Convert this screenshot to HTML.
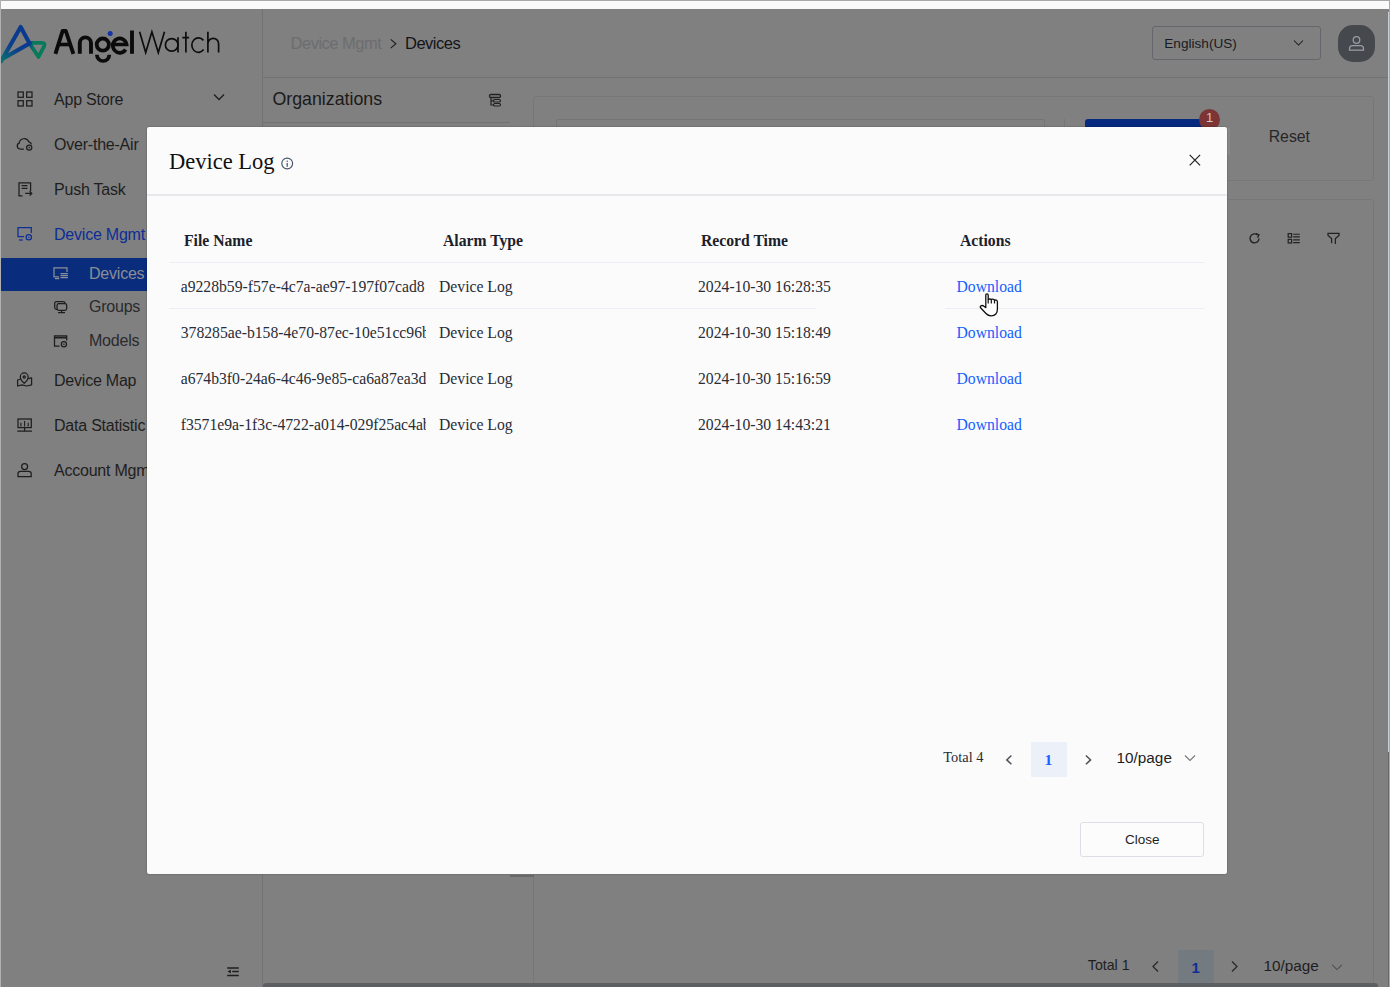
<!DOCTYPE html>
<html><head><meta charset="utf-8">
<style>
*{box-sizing:border-box;margin:0;padding:0}
html,body{width:1390px;height:987px;overflow:hidden;background:#808080}
body{position:relative;font-family:"Liberation Sans",sans-serif}
.a{position:absolute}
.t{white-space:nowrap}
svg{overflow:visible}
</style></head><body>
<div class="a" style="left:0px;top:0px;width:1390px;height:1px;background:#a8a8a8;"></div>
<div class="a" style="left:1px;top:1px;width:1388px;height:8px;background:#fafafa;"></div>
<div class="a" style="left:0px;top:0px;width:1px;height:987px;background:#b0b0b0;"></div>
<div class="a" style="left:1389px;top:0px;width:1px;height:987px;background:#a8a8a8;"></div>
<div class="a" style="left:1px;top:9px;width:1388px;height:978px;background:#808080;"></div>
<div class="a" style="left:1388px;top:12px;width:1px;height:740px;background:#c8ccd4;"></div>
<div class="a" style="left:1388px;top:752px;width:1px;height:235px;background:#6a6a6a;"></div>
<div class="a" style="left:262px;top:9px;width:1px;height:978px;background:#727272;"></div>
<div class="a" style="left:263px;top:77px;width:1125px;height:1px;background:#727272;"></div>
<svg class="a" style="left:0px;top:20px;" width="50" height="48" viewBox="0 0 50 48"><defs><linearGradient id="lg1" gradientUnits="userSpaceOnUse" x1="3" y1="40" x2="18" y2="18"><stop offset="0" stop-color="#0a6e72"/><stop offset="0.6" stop-color="#0a3f8c"/><stop offset="1" stop-color="#0a3a8e"/></linearGradient><linearGradient id="lg2" gradientUnits="userSpaceOnUse" x1="29" y1="30" x2="40" y2="30"><stop offset="0" stop-color="#0a4a88"/><stop offset="0.4" stop-color="#077a5a"/><stop offset="1" stop-color="#077a5a"/></linearGradient></defs><path d="M29.5 23.2 L38.5 36.9 L44.2 26.2 Q45.3 22.8 42 22.8 L31 22.8" fill="none" stroke="url(#lg2)" stroke-width="3.8" stroke-linejoin="round" stroke-linecap="round"/><path d="M1 41.5 L20.7 7 L29.6 23.4 L1 39.8 Z" fill="none" stroke="url(#lg1)" stroke-width="4.1" stroke-linejoin="round"/></svg>
<svg class="a" style="left:50px;top:25px;" width="90" height="43" viewBox="0 0 90 43"><g fill="none" stroke="#0b0b0b" stroke-width="3.9"><path d="M5.4 28.8 L12.6 6 H15.8 L23.4 28.8" stroke-linejoin="round"/><path d="M9 19.5 H19.5" stroke-width="3.6"/><path d="M29.8 28.8 V18 A5.6 5.6 0 0 1 41 18 V28.8"/><circle cx="52.8" cy="19.6" r="6.1" stroke-width="3.8"/><path d="M46.9 29.8 A6.2 6.2 0 0 0 59.3 29.8" stroke-width="3.7"/><path d="M61 19.5 H76.6 A6.9 7.2 0 1 0 75.6 24.5" stroke-width="3.7"/><path d="M82 5.5 V28.8"/></g><circle cx="60.2" cy="8.4" r="2.5" fill="#1334a8"/></svg>
<svg class="a" style="left:136px;top:25px;" width="90" height="43" viewBox="0 0 90 43"><g fill="none" stroke="#0d0d0d" stroke-width="1.7"><path d="M3.6 6.8 L9.7 27.5 L15.9 6.8 L22.3 27.5 L28.5 6.8"/><circle cx="35.7" cy="19.9" r="6.3"/><path d="M42 12.3 V27.6"/><path d="M49.9 6.8 V27.6 M46.3 12.6 H53.1"/><path d="M67.4 15.4 A6.6 7.2 0 1 0 67.6 24.6"/><path d="M71.9 6.8 V27.6 M71.9 18.7 A5.35 5.35 0 0 1 82.6 18.7 V27.6"/></g></svg>
<div class="a t" style="left:54px;top:89.35px;font-family:'Liberation Sans',sans-serif;font-size:16px;line-height:22px;color:#1e1e1e;font-weight:400;letter-spacing:-0.22px;">App Store</div>
<div class="a t" style="left:54px;top:134.35px;font-family:'Liberation Sans',sans-serif;font-size:16px;line-height:22px;color:#1e1e1e;font-weight:400;letter-spacing:-0.22px;">Over-the-Air</div>
<div class="a t" style="left:54px;top:179.35px;font-family:'Liberation Sans',sans-serif;font-size:16px;line-height:22px;color:#1e1e1e;font-weight:400;letter-spacing:-0.22px;">Push Task</div>
<div class="a t" style="left:54px;top:224.35px;font-family:'Liberation Sans',sans-serif;font-size:16px;line-height:22px;color:#0c2e96;font-weight:400;letter-spacing:-0.22px;">Device Mgmt</div>
<div class="a t" style="left:54px;top:370.35px;font-family:'Liberation Sans',sans-serif;font-size:16px;line-height:22px;color:#1e1e1e;font-weight:400;letter-spacing:-0.22px;">Device Map</div>
<div class="a t" style="left:54px;top:415.35px;font-family:'Liberation Sans',sans-serif;font-size:16px;line-height:22px;color:#1e1e1e;font-weight:400;letter-spacing:-0.22px;">Data Statistic</div>
<div class="a t" style="left:54px;top:460.35px;font-family:'Liberation Sans',sans-serif;font-size:16px;line-height:22px;color:#1e1e1e;font-weight:400;letter-spacing:-0.22px;">Account Mgmt</div>
<svg class="a" style="left:17px;top:91px;" width="16" height="16" viewBox="0 0 16 16"><rect x="1" y="1" width="5.3" height="5.3" fill="none" stroke="#1e1e1e" stroke-width="1.25"/><rect x="9.7" y="1" width="5.3" height="5.3" fill="none" stroke="#1e1e1e" stroke-width="1.25"/><rect x="1" y="9.7" width="5.3" height="5.3" fill="none" stroke="#1e1e1e" stroke-width="1.25"/><rect x="9.7" y="9.7" width="5.3" height="5.3" fill="none" stroke="#1e1e1e" stroke-width="1.25"/></svg>
<svg class="a" style="left:16px;top:136px;" width="16" height="16" viewBox="0 0 16 16"><path d="M7.8 13 H4 A3 3 0 0 1 3.2 7.2 A5 5 0 0 1 12.8 5.8 A3 3 0 0 1 15.4 8.4" fill="none" stroke="#1e1e1e" stroke-width="1.25"/><circle cx="13.2" cy="11.6" r="2.6" fill="none" stroke="#1e1e1e" stroke-width="1.25"/><circle cx="13.2" cy="11.6" r="0.8" fill="#1e1e1e"/></svg>
<svg class="a" style="left:17px;top:181px;" width="16" height="16" viewBox="0 0 16 16"><path d="M5.5 14.9 H2 V1.9 H13.6 V10" fill="none" stroke="#1e1e1e" stroke-width="1.25"/><path d="M4.6 4.6 H10.5 M4.6 7.4 H10.5" fill="none" stroke="#1e1e1e" stroke-width="1.25"/><path d="M8.2 12.4 H14.8 M12.6 10.2 L14.8 12.4 L12.6 14.6" fill="none" stroke="#1e1e1e" stroke-width="1.25"/></svg>
<svg class="a" style="left:17px;top:226px;" width="16" height="16" viewBox="0 0 16 16"><path d="M7 10.6 H1 V1.7 H14.3 V7" fill="none" stroke="#0c2e96" stroke-width="1.25"/><path d="M2.1 14 H5.8" fill="none" stroke="#0c2e96" stroke-width="1.25"/><circle cx="11.8" cy="11.2" r="2.7" fill="none" stroke="#0c2e96" stroke-width="1.25"/><circle cx="11.8" cy="11.2" r="0.8" fill="#0c2e96"/></svg>
<svg class="a" style="left:17px;top:372px;" width="16" height="16" viewBox="0 0 16 16"><path d="M7.25 11.2 C4 8.2 3.3 6.6 3.3 4.9 A3.95 3.95 0 0 1 11.2 4.9 C11.2 6.6 10.5 8.2 7.25 11.2 Z" fill="none" stroke="#1e1e1e" stroke-width="1.25"/><circle cx="7.25" cy="5" r="1.1" fill="none" stroke="#1e1e1e" stroke-width="1.25"/><path d="M3.6 7 L0.6 8 V14 L5 12.8 L9.8 14 L14.6 12.8 V5.8 L11.2 6.6" fill="none" stroke="#1e1e1e" stroke-width="1.25" stroke-linejoin="round"/></svg>
<svg class="a" style="left:17px;top:417px;" width="16" height="16" viewBox="0 0 16 16"><rect x="1" y="2" width="13.3" height="8.6" fill="none" stroke="#1e1e1e" stroke-width="1.25"/><path d="M0.3 14.2 H14.9 M7.6 10.6 V14" fill="none" stroke="#1e1e1e" stroke-width="1.25"/><path d="M3.9 5.7 V9.4 M7.6 3.9 V9.4 M11.2 5.7 V9.4" fill="none" stroke="#1e1e1e" stroke-width="1.1"/></svg>
<svg class="a" style="left:17px;top:462px;" width="16" height="16" viewBox="0 0 16 16"><circle cx="7.6" cy="4.6" r="3" fill="none" stroke="#1e1e1e" stroke-width="1.25"/><path d="M1 14.5 V11.5 Q1 9.3 3.5 9.3 H11.7 Q14.2 9.3 14.2 11.5 V14.5 Z" fill="none" stroke="#1e1e1e" stroke-width="1.25"/></svg>
<svg class="a" style="left:213px;top:93px;" width="12" height="8" viewBox="0 0 12 8"><path d="M1 1.5 L6 6.5 L11 1.5" fill="none" stroke="#1e1e1e" stroke-width="1.3"/></svg>
<div class="a" style="left:1px;top:258px;width:261px;height:33px;background:#0a2c7c;"></div>
<div class="a t" style="left:89px;top:263.25px;font-family:'Liberation Sans',sans-serif;font-size:16px;line-height:22px;color:#8a8e96;font-weight:400;letter-spacing:-0.22px;">Devices</div>
<div class="a t" style="left:89px;top:296.25px;font-family:'Liberation Sans',sans-serif;font-size:16px;line-height:22px;color:#2a2a2c;font-weight:400;letter-spacing:-0.22px;">Groups</div>
<div class="a t" style="left:89px;top:330.35px;font-family:'Liberation Sans',sans-serif;font-size:16px;line-height:22px;color:#2a2a2c;font-weight:400;letter-spacing:-0.22px;">Models</div>
<svg class="a" style="left:53px;top:266px;" width="16" height="16" viewBox="0 0 16 16"><path d="M6 10.8 H1 V1.8 H14 V6" fill="none" stroke="#8a8e96" stroke-width="1.25"/><path d="M7.5 7.6 H14.9 M7.5 9.6 H14.9 M7.5 11.6 H14.9" fill="none" stroke="#8a8e96" stroke-width="1.1"/><path d="M2 12.6 H6.3" fill="none" stroke="#8a8e96" stroke-width="1.25"/></svg>
<svg class="a" style="left:53px;top:299px;" width="16" height="16" viewBox="0 0 16 16"><rect x="1.7" y="2.6" width="10.3" height="7.7" rx="1.8" fill="none" stroke="#1e1e1e" stroke-width="1.25"/><rect x="4" y="4.6" width="9.7" height="6.8" rx="1.8" fill="#808080" stroke="#1e1e1e" stroke-width="1.25"/><path d="M8.6 11.4 V13.6 M5.1 13.7 H12" fill="none" stroke="#1e1e1e" stroke-width="1.25"/></svg>
<svg class="a" style="left:53px;top:333px;" width="16" height="16" viewBox="0 0 16 16"><path d="M6.5 13.1 H1.5 V2.8 H13.7 V7.5" fill="none" stroke="#1e1e1e" stroke-width="1.25"/><path d="M1.5 4.6 H13.7" fill="none" stroke="#1e1e1e" stroke-width="1.8"/><circle cx="10.9" cy="11.2" r="2.6" fill="none" stroke="#1e1e1e" stroke-width="1.25"/><circle cx="10.9" cy="11.2" r="0.8" fill="#1e1e1e"/></svg>
<svg class="a" style="left:227px;top:965px;" width="12" height="12" viewBox="0 0 12 12"><path d="M0.2 3 H11.8 M5.2 6.5 H11.8 M0.2 10.5 H11.8" stroke="#1e1e1e" stroke-width="1.4"/><path d="M0.6 6.5 L3.8 4.6 V8.4 Z" fill="#1e1e1e"/></svg>
<div class="a t" style="left:290.6px;top:31.78px;font-family:'Liberation Sans',sans-serif;font-size:16.5px;line-height:23px;color:#6c6d70;font-weight:400;letter-spacing:-0.5px;">Device Mgmt</div>
<svg class="a" style="left:389px;top:37px;" width="9" height="13" viewBox="0 0 9 13"><path d="M1.7 2.3 L6.9 6.75 L1.7 11.2" fill="none" stroke="#1c1e24" stroke-width="1.1"/></svg>
<div class="a t" style="left:405px;top:31.78px;font-family:'Liberation Sans',sans-serif;font-size:16.5px;line-height:23px;color:#141418;font-weight:400;letter-spacing:-0.5px;">Devices</div>
<div class="a" style="left:1152px;top:26px;width:169px;height:34px;background:none;border:1px solid #64666b;border-radius:3px"></div>
<div class="a t" style="left:1164.3px;top:34.09px;font-family:'Liberation Sans',sans-serif;font-size:13.6px;line-height:19px;color:#1a1a22;font-weight:400;">English(US)</div>
<svg class="a" style="left:1293px;top:39px;" width="11" height="7" viewBox="0 0 11 7"><path d="M1 1.5 L5.5 6 L10 1.5" fill="none" stroke="#1a1e26" stroke-width="1.05"/></svg>
<div class="a" style="left:1338px;top:25px;width:37px;height:37px;background:#45484d;border-radius:15px"></div>
<svg class="a" style="left:1346px;top:33px;" width="21" height="21" viewBox="0 0 21 21"><circle cx="10.5" cy="7" r="3.3" fill="none" stroke="#9a9ea6" stroke-width="1.25"/><path d="M3.5 17 V15.5 Q3.5 12.5 6.5 12.5 H14.5 Q17.5 12.5 17.5 15.5 V17 Z" fill="none" stroke="#9a9ea6" stroke-width="1.25"/></svg>
<div class="a t" style="left:272.4px;top:87.13px;font-family:'Liberation Sans',sans-serif;font-size:17.8px;line-height:25px;color:#1a1a1a;font-weight:400;">Organizations</div>
<svg class="a" style="left:488px;top:93px;" width="14" height="14" viewBox="0 0 14 14"><rect x="1.5" y="1.5" width="11" height="3" rx="1.2" fill="none" stroke="#222" stroke-width="1.3"/><rect x="5.5" y="6.5" width="7" height="2.5" rx="1.2" fill="none" stroke="#222" stroke-width="1.2"/><rect x="5.5" y="10.5" width="7" height="2.5" rx="1.2" fill="none" stroke="#222" stroke-width="1.2"/><path d="M3 4.5 V12 H5.5 M3 7.8 H5.5" fill="none" stroke="#222" stroke-width="1.2"/></svg>
<div class="a" style="left:263px;top:122px;width:247px;height:1px;background:#727272;"></div>
<div class="a" style="left:533px;top:96px;width:841px;height:85px;background:none;border:1px solid #777;border-radius:3px"></div>
<div class="a" style="left:556px;top:119px;width:489px;height:40px;background:none;border:1px solid #757575;border-radius:2px"></div>
<div class="a" style="left:1063.5px;top:119px;width:1px;height:40px;background:#757575;"></div>
<div class="a" style="left:1085px;top:119px;width:120px;height:36px;background:#072a80;border-radius:3px"></div>
<div class="a" style="left:1199px;top:109px;width:21px;height:21px;background:#7c3434;border-radius:50%"></div>
<div class="a t" style="left:1206px;top:109.49px;font-family:'Liberation Sans',sans-serif;font-size:13px;line-height:18px;color:#d4c6c6;font-weight:400;">1</div>
<div class="a t" style="left:1268.7px;top:125.62px;font-family:'Liberation Sans',sans-serif;font-size:15.8px;line-height:22px;color:#262626;font-weight:400;">Reset</div>
<div class="a" style="left:533px;top:199px;width:841px;height:800px;background:none;border:1px solid #777;border-radius:3px"></div>
<div class="a" style="left:1227px;top:128px;width:3px;height:27px;background:#86888b;"></div>
<svg class="a" style="left:1248px;top:232px;" width="13" height="13" viewBox="0 0 13 13"><path d="M11 6.5 A4.5 4.5 0 1 1 9.5 3" fill="none" stroke="#222" stroke-width="1.4"/><path d="M8 1.5 L11 2.8 L9.5 5.8" fill="none" stroke="#222" stroke-width="1.3"/></svg>
<svg class="a" style="left:1287px;top:232px;" width="14" height="13" viewBox="0 0 14 13"><rect x="1.2" y="1.6" width="3.4" height="3.6" fill="none" stroke="#222" stroke-width="1.2"/><rect x="1.2" y="7.4" width="3.4" height="3.6" fill="none" stroke="#222" stroke-width="1.2"/><path d="M6.2 2.3 H12.8 M6.2 4.9 H12.8 M6.2 7.9 H12.8 M6.2 10.6 H12.8" stroke="#222" stroke-width="1.1"/></svg>
<svg class="a" style="left:1327px;top:232px;" width="13" height="13" viewBox="0 0 13 13"><path d="M4.6 11.3 V6.6 L1 3.4 V1.4 H12 V3.4 L8.4 6.6 V12" fill="none" stroke="#222" stroke-width="1.25" stroke-linejoin="miter"/></svg>
<div class="a t" style="left:1087.8px;top:954.98px;font-family:'Liberation Sans',sans-serif;font-size:14.2px;line-height:20px;color:#1e1e1e;font-weight:400;">Total 1</div>
<svg class="a" style="left:1151px;top:960px;" width="9" height="13" viewBox="0 0 9 13"><path d="M7 1.5 L2 6.5 L7 11.5" fill="none" stroke="#2a2a2a" stroke-width="1.3"/></svg>
<div class="a" style="left:1178px;top:950px;width:36px;height:37px;background:#737a80;"></div>
<div class="a t" style="left:1191.5px;top:957.30px;font-family:'Liberation Sans',sans-serif;font-size:15px;line-height:21px;color:#0c2e96;font-weight:700;">1</div>
<svg class="a" style="left:1230px;top:960px;" width="9" height="13" viewBox="0 0 9 13"><path d="M2 1.5 L7 6.5 L2 11.5" fill="none" stroke="#2a2a2a" stroke-width="1.3"/></svg>
<div class="a t" style="left:1263.4px;top:955.00px;font-family:'Liberation Sans',sans-serif;font-size:15.3px;line-height:21px;color:#1e1e1e;font-weight:400;">10/page</div>
<svg class="a" style="left:1331px;top:963px;" width="12" height="8" viewBox="0 0 12 8"><path d="M1.2 1.8 L6 6.6 L10.8 1.8" fill="none" stroke="#2e3640" stroke-width="0.95"/></svg>
<div class="a" style="left:263px;top:983px;width:1115px;height:4px;background:#5e5f62;border-radius:3px 3px 0 0"></div>
<div class="a" style="left:0px;top:0px;width:1px;height:987px;background:#b0b0b0;"></div>
<div class="a" style="left:510px;top:875px;width:24px;height:2px;background:#6a6a6a;"></div>
<div class="a" style="left:147px;top:127px;width:1080px;height:747px;background:#fbfbfc;border-radius:2px;box-shadow:0 0 2px rgba(0,0,0,.35)"></div>
<div class="a t" style="left:169px;top:145.81px;font-family:'Liberation Serif',serif;font-size:22.5px;line-height:31px;color:#111;font-weight:400;">Device Log</div>
<svg class="a" style="left:280px;top:157px;" width="14" height="14" viewBox="0 0 14 14"><circle cx="7.2" cy="6.5" r="5.4" fill="none" stroke="#465466" stroke-width="1.15"/><path d="M7.2 5.9 V9.7" stroke="#465466" stroke-width="1.25"/><circle cx="7.2" cy="4.3" r="0.75" fill="#465466"/></svg>
<svg class="a" style="left:1189px;top:154px;" width="12" height="12" viewBox="0 0 12 12"><path d="M0.7 0.9 L11.1 11.3 M11.1 0.9 L0.7 11.3" stroke="#222" stroke-width="1.2"/></svg>
<div class="a" style="left:147px;top:194px;width:1080px;height:2px;background:#e6e8ec;"></div>
<div class="a t" style="left:184px;top:229.50px;font-family:'Liberation Serif',serif;font-size:15.7px;line-height:22px;color:#1b212b;font-weight:700;">File Name</div>
<div class="a t" style="left:443px;top:229.50px;font-family:'Liberation Serif',serif;font-size:15.7px;line-height:22px;color:#1b212b;font-weight:700;">Alarm Type</div>
<div class="a t" style="left:701px;top:229.50px;font-family:'Liberation Serif',serif;font-size:15.7px;line-height:22px;color:#1b212b;font-weight:700;">Record Time</div>
<div class="a t" style="left:960px;top:229.50px;font-family:'Liberation Serif',serif;font-size:15.7px;line-height:22px;color:#1b212b;font-weight:700;">Actions</div>
<div class="a" style="left:169px;top:262px;width:1035px;height:1px;background:#ebeff5;"></div>
<div class="a t" style="left:180.7px;top:276.20px;font-family:'Liberation Serif',serif;font-size:15.7px;line-height:22px;color:#282d36;font-weight:400;width:245.3px;overflow:hidden;">a9228b59-f57e-4c7a-ae97-197f07cad8</div>
<div class="a t" style="left:439px;top:276.20px;font-family:'Liberation Serif',serif;font-size:15.7px;line-height:22px;color:#282d36;font-weight:400;">Device Log</div>
<div class="a t" style="left:698px;top:276.20px;font-family:'Liberation Serif',serif;font-size:15.7px;line-height:22px;color:#282d36;font-weight:400;">2024-10-30 16:28:35</div>
<div class="a t" style="left:956.5px;top:276.20px;font-family:'Liberation Serif',serif;font-size:15.7px;line-height:22px;color:#1560ff;font-weight:400;">Download</div>
<div class="a t" style="left:180.7px;top:322.20px;font-family:'Liberation Serif',serif;font-size:15.7px;line-height:22px;color:#282d36;font-weight:400;width:245.3px;overflow:hidden;">378285ae-b158-4e70-87ec-10e51cc96b</div>
<div class="a t" style="left:439px;top:322.20px;font-family:'Liberation Serif',serif;font-size:15.7px;line-height:22px;color:#282d36;font-weight:400;">Device Log</div>
<div class="a t" style="left:698px;top:322.20px;font-family:'Liberation Serif',serif;font-size:15.7px;line-height:22px;color:#282d36;font-weight:400;">2024-10-30 15:18:49</div>
<div class="a t" style="left:956.5px;top:322.20px;font-family:'Liberation Serif',serif;font-size:15.7px;line-height:22px;color:#1560ff;font-weight:400;">Download</div>
<div class="a t" style="left:180.7px;top:368.20px;font-family:'Liberation Serif',serif;font-size:15.7px;line-height:22px;color:#282d36;font-weight:400;width:245.3px;overflow:hidden;">a674b3f0-24a6-4c46-9e85-ca6a87ea3d</div>
<div class="a t" style="left:439px;top:368.20px;font-family:'Liberation Serif',serif;font-size:15.7px;line-height:22px;color:#282d36;font-weight:400;">Device Log</div>
<div class="a t" style="left:698px;top:368.20px;font-family:'Liberation Serif',serif;font-size:15.7px;line-height:22px;color:#282d36;font-weight:400;">2024-10-30 15:16:59</div>
<div class="a t" style="left:956.5px;top:368.20px;font-family:'Liberation Serif',serif;font-size:15.7px;line-height:22px;color:#1560ff;font-weight:400;">Download</div>
<div class="a t" style="left:180.7px;top:414.20px;font-family:'Liberation Serif',serif;font-size:15.7px;line-height:22px;color:#282d36;font-weight:400;width:245.3px;overflow:hidden;">f3571e9a-1f3c-4722-a014-029f25ac4ab</div>
<div class="a t" style="left:439px;top:414.20px;font-family:'Liberation Serif',serif;font-size:15.7px;line-height:22px;color:#282d36;font-weight:400;">Device Log</div>
<div class="a t" style="left:698px;top:414.20px;font-family:'Liberation Serif',serif;font-size:15.7px;line-height:22px;color:#282d36;font-weight:400;">2024-10-30 14:43:21</div>
<div class="a t" style="left:956.5px;top:414.20px;font-family:'Liberation Serif',serif;font-size:15.7px;line-height:22px;color:#1560ff;font-weight:400;">Download</div>
<div class="a" style="left:169px;top:308px;width:647px;height:1px;background:#ebeff5;"></div>
<div class="a" style="left:945px;top:308px;width:259px;height:1px;background:#ebeff5;"></div>
<svg class="a" style="left:978px;top:290px;" width="22" height="28" viewBox="0 0 22 28"><path d="M7.8 17.2 V5.1 Q7.8 3.9 9 3.9 Q10.2 3.9 10.2 5.1 V9.6 Q11.7 8.5 13.3 9.4 Q15 8.7 16.5 10.1 Q19.4 9.6 19.4 12 V19 Q19.4 25.8 13.2 25.8 Q10 25.8 8 23.5 L2.6 17.8 Q1.8 16.5 3 15.8 Q4.6 15 6 16.3 L7.8 17.6 Z" fill="#fff" stroke="#111" stroke-width="1.3" stroke-linejoin="round"/><path d="M10.2 9.6 V13.6 M13.3 9.4 V13.6 M16.5 10.1 V13.6" stroke="#111" stroke-width="1.2"/></svg>
<div class="a t" style="left:943.3px;top:747.24px;font-family:'Liberation Serif',serif;font-size:14.4px;line-height:20px;color:#262b33;font-weight:400;">Total 4</div>
<svg class="a" style="left:1004px;top:753px;" width="9" height="14" viewBox="0 0 9 14"><path d="M7.4 2.5 L2.8 6.9 L7.4 11.3" fill="none" stroke="#4d535b" stroke-width="1.5"/></svg>
<div class="a" style="left:1031px;top:742px;width:36px;height:35px;background:#ecf0f8;"></div>
<div class="a t" style="left:1044.5px;top:748.77px;font-family:'Liberation Serif',serif;font-size:15.5px;line-height:22px;color:#1f5fff;font-weight:700;">1</div>
<svg class="a" style="left:1084px;top:753px;" width="9" height="14" viewBox="0 0 9 14"><path d="M1.9 2.5 L6.6 6.9 L1.9 11.3" fill="none" stroke="#4d535b" stroke-width="1.5"/></svg>
<div class="a t" style="left:1116.6px;top:746.90px;font-family:'Liberation Sans',sans-serif;font-size:15.3px;line-height:21px;color:#1e1e1e;font-weight:400;">10/page</div>
<svg class="a" style="left:1184px;top:754px;" width="12" height="8" viewBox="0 0 12 8"><path d="M1 1.5 L6 6.5 L11 1.5" fill="none" stroke="#777" stroke-width="1.1"/></svg>
<div class="a" style="left:1080px;top:821.5px;width:124px;height:35px;background:#fcfcfd;border:1px solid #dcdfe6;border-radius:3px"></div>
<div class="a t" style="left:1125px;top:830.22px;font-family:'Liberation Sans',sans-serif;font-size:13.5px;line-height:19px;color:#1e1e1e;font-weight:400;">Close</div>
</body></html>
